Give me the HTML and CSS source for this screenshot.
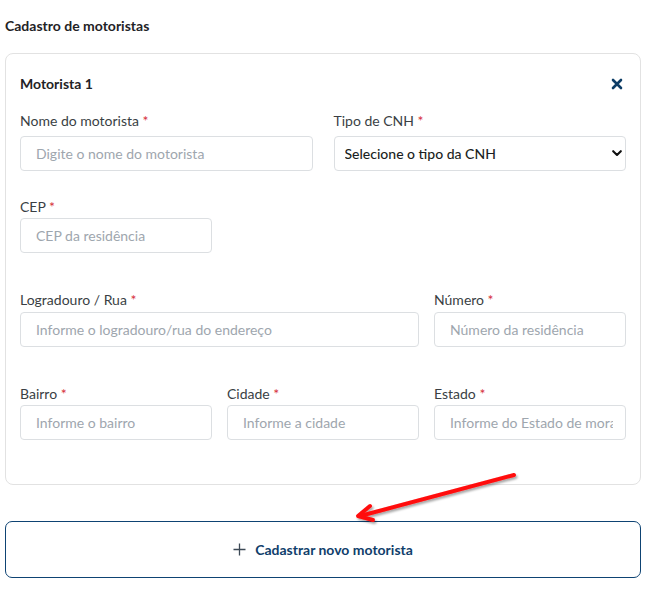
FILE: index.html
```html
<!DOCTYPE html>
<html lang="pt-BR">
<head>
<meta charset="utf-8">
<title>Cadastro de motoristas</title>
<link rel="stylesheet" href="styles.css">
</head>
<body>
<div class="page">
  <h1 class="title">Cadastro de motoristas</h1>
  <section class="card">
    <div class="card-head">
      <h2 class="card-title">Motorista 1</h2>
      <button class="close" aria-label="Remover">
        <svg width="12" height="12" viewBox="0 0 12 12"><path d="M2 2 L10 10 M10 2 L2 10" stroke="#0d3d66" stroke-width="2.6" stroke-linecap="round"/></svg>
      </button>
    </div>

    <div class="row row-1 grid-2">
      <div class="field">
        <label class="label">Nome do motorista <span class="req">*</span></label>
        <input class="input" type="text" placeholder="Digite o nome do motorista">
      </div>
      <div class="field">
        <label class="label">Tipo de CNH <span class="req">*</span></label>
        <div class="select-wrap">
          <select class="input select">
            <option>Selecione o tipo da CNH</option>
          </select>
          <svg class="chev" width="10" height="7" viewBox="0 0 10 7"><path d="M1.2 1.2 L5 5 L8.8 1.2" fill="none" stroke="#111" stroke-width="2.1" stroke-linecap="round" stroke-linejoin="round"/></svg>
        </div>
      </div>
    </div>

    <div class="row row-2 grid-3">
      <div class="field">
        <label class="label">CEP <span class="req">*</span></label>
        <input class="input" type="text" placeholder="CEP da residência">
      </div>
    </div>

    <div class="row row-3 grid-3">
      <div class="field span-2">
        <label class="label">Logradouro / Rua <span class="req">*</span></label>
        <input class="input" type="text" placeholder="Informe o logradouro/rua do endereço">
      </div>
      <div class="field">
        <label class="label">Número <span class="req">*</span></label>
        <input class="input" type="text" placeholder="Número da residência">
      </div>
    </div>

    <div class="row row-4 grid-3">
      <div class="field">
        <label class="label">Bairro <span class="req">*</span></label>
        <input class="input" type="text" placeholder="Informe o bairro">
      </div>
      <div class="field">
        <label class="label">Cidade <span class="req">*</span></label>
        <input class="input" type="text" placeholder="Informe a cidade">
      </div>
      <div class="field">
        <label class="label">Estado <span class="req">*</span></label>
        <input class="input" type="text" placeholder="Informe do Estado de moradia">
      </div>
    </div>
  </section>

  <button class="add-btn">
    <svg width="13" height="13" viewBox="0 0 13 13"><path d="M6.5 0.5 V12.5 M0.5 6.5 H12.5" stroke="#3d4a56" stroke-width="1.3"/></svg>
    <span>Cadastrar novo motorista</span>
  </button>

  <svg class="arrow" width="651" height="599" viewBox="0 0 651 599">
    <defs>
      <filter id="sh" x="-10%" y="-50%" width="120%" height="200%">
        <feDropShadow dx="1.5" dy="2" stdDeviation="1.2" flood-color="#000" flood-opacity="0.35"/>
      </filter>
    </defs>
    <g filter="url(#sh)" stroke="#ff0a0a" stroke-width="4" stroke-linecap="round" stroke-linejoin="round" fill="none">
      <path d="M514 475 L360 516"/>
      <path d="M370 506 L358 516 L373 520"/>
    </g>
  </svg>
</div>
</body>
</html>
```

FILE: styles.css
```css
* { box-sizing: border-box; }

html, body {
  margin: 0;
  padding: 0;
  background: #ffffff;
}

body {
  font-family: "Lato", "Noto Sans", sans-serif;
  color: #212529;
}

.page {
  position: relative;
  width: 651px;
  height: 599px;
  padding: 16px 10px 0 5px;
}

.title {
  margin: 0;
  font-size: 14px;
  line-height: 20px;
  font-weight: 700;
  color: #1f2326;
}

.card {
  margin-top: 17px;
  border: 1px solid #e2e2e2;
  border-radius: 8px;
  padding: 20px 14px 44px 14px;
}

.card-head {
  display: flex;
  align-items: center;
  justify-content: space-between;
  height: 20px;
}

.card-title {
  margin: 0;
  font-size: 14px;
  line-height: 20px;
  font-weight: 700;
  color: #1f2326;
}

.close {
  border: 0;
  background: none;
  padding: 0;
  margin-right: 3px;
  display: flex;
  align-items: center;
  cursor: pointer;
}

.row { display: grid; }
.grid-2 { grid-template-columns: 1fr 1fr; column-gap: 21px; }
.grid-3 { grid-template-columns: 1fr 1fr 1fr; column-gap: 15px; }
.span-2 { grid-column: span 2; }

.row-1 { margin-top: 17px; }
.row-2 { margin-top: 26px; }
.row-3 { margin-top: 37px; }
.row-4 { margin-top: 37px; }

.field { display: flex; flex-direction: column; min-width: 0; }

.label {
  font-size: 14px;
  line-height: 20px;
  color: #3a3f44;
  margin-bottom: 1px;
}
.row-1 .label { margin-bottom: 5px; }
.row-3 .label { margin-bottom: 2px; }

.req { color: #d6303b; }

.input {
  height: 35px;
  width: 100%;
  border: 1px solid #dcdfe2;
  border-radius: 4px;
  padding: 0 12px 0 15px;
  font-family: inherit;
  font-size: 14px;
  color: #212529;
  background: #fff;
  outline: none;
}
.input::placeholder { color: #9ea6ae; }

.select-wrap { position: relative; }
.select {
  appearance: none;
  -webkit-appearance: none;
  padding: 0 30px 0 10px;
  color: #1b1f23;
  font-weight: 500;
}
.chev {
  position: absolute;
  right: 4px;
  top: 14px;
  pointer-events: none;
}

.add-btn {
  margin-top: 36px;
  width: 636px;
  height: 57px;
  border: 1px solid #0e4373;
  border-radius: 7px;
  background: #fff;
  display: flex;
  align-items: center;
  justify-content: center;
  gap: 9px;
  font-family: inherit;
  font-size: 14px;
  font-weight: 700;
  color: #103e6b;
  cursor: pointer;
}

.arrow {
  position: absolute;
  left: 0;
  top: 0;
  pointer-events: none;
}
```
